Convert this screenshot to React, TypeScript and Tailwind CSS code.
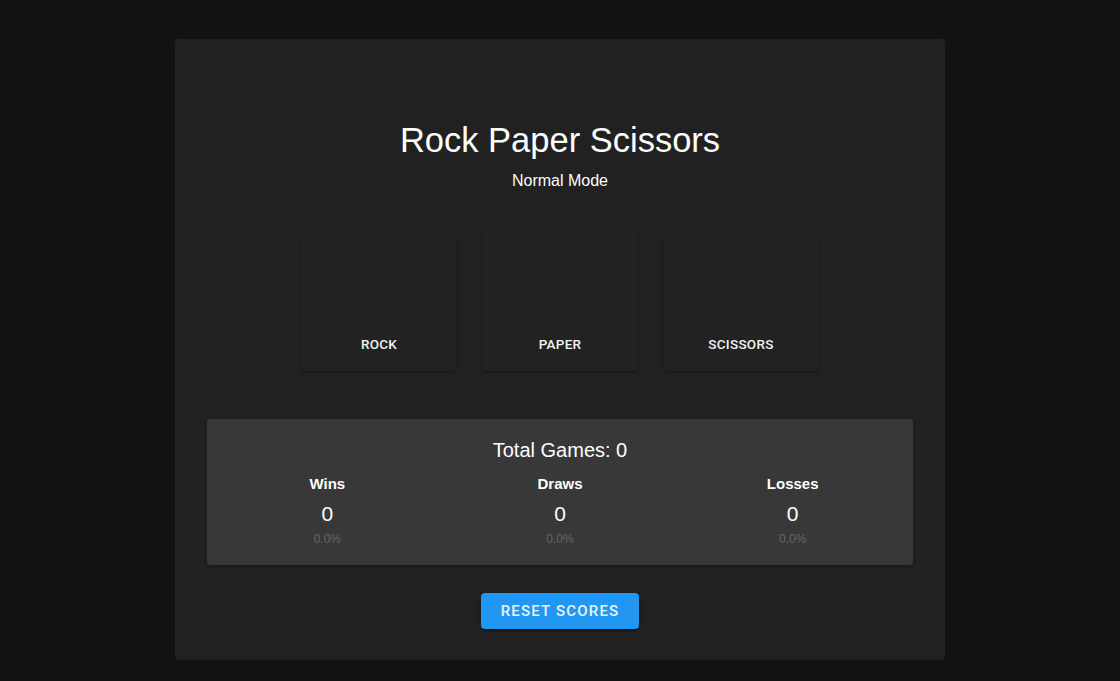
import React from "react";

const choices = ["ROCK", "PAPER", "SCISSORS"];
const stats = [
  { label: "Wins", value: 0, pct: "0.0%" },
  { label: "Draws", value: 0, pct: "0.0%" },
  { label: "Losses", value: 0, pct: "0.0%" },
];

export default function App() {
  return (
    <div
      className="min-h-[681px] w-full bg-[#121212] pt-[39px] pb-[21px]"
      style={{ fontFamily: '"Liberation Sans", Arial, sans-serif' }}
    >
      <div className="mx-auto w-[770px] rounded bg-[#212121] px-8 pt-[80px] pb-[31px] text-white">
        <h1 className="text-center text-[34.5px] leading-[42px] font-normal">Rock Paper Scissors</h1>
        <p className="mt-2 text-center text-[16px] leading-[24px]">Normal Mode</p>

        <div className="mt-[38px] flex justify-center gap-[27px]">
          {choices.map((c) => (
            <button
              key={c}
              className="flex h-[140px] w-[154px] flex-col items-center justify-end rounded bg-[#222222] pb-[17px] text-[13.5px] font-medium tracking-[0.02em] text-[#f2f2f2] shadow-[0_2px_1px_-1px_rgba(0,0,0,0.2),0_1px_1px_0_rgba(0,0,0,0.14),0_1px_3px_0_rgba(0,0,0,0.12)]"
              style={{ fontFamily: 'Roboto, "Liberation Sans", sans-serif' }}
            >
              {c}
            </button>
          ))}
        </div>

        <div className="mt-[48px] rounded bg-[#383838] px-1 pt-[16px] pb-[17px] shadow-[0_1px_3px_rgba(0,0,0,0.3)]">
          <div className="text-center text-[20px] leading-[30px]">Total Games: 0</div>
          <div className="mt-[8px] grid grid-cols-3">
            {stats.map((s) => (
              <div key={s.label} className="flex flex-col items-center">
                <div className="text-[15px] leading-[22px] font-bold">{s.label}</div>
                <div className="mt-[5px] text-[21px] leading-[28px]">{s.value}</div>
                <div className="mt-[2px] text-[12px] leading-[18px] text-[#666666]">{s.pct}</div>
              </div>
            ))}
          </div>
        </div>

        <div className="mt-[28px] flex justify-center">
          <button
            className="h-[36px] w-[158px] rounded bg-[#2196f3] text-[15px] font-medium tracking-[0.08em] text-[#e8f4fe] shadow-[0_3px_1px_-2px_rgba(0,0,0,0.2),0_2px_2px_0_rgba(0,0,0,0.14),0_1px_5px_0_rgba(0,0,0,0.12)]"
            style={{ fontFamily: 'Roboto, "Liberation Sans", sans-serif' }}
          >
            RESET SCORES
          </button>
        </div>
      </div>
    </div>
  );
}
